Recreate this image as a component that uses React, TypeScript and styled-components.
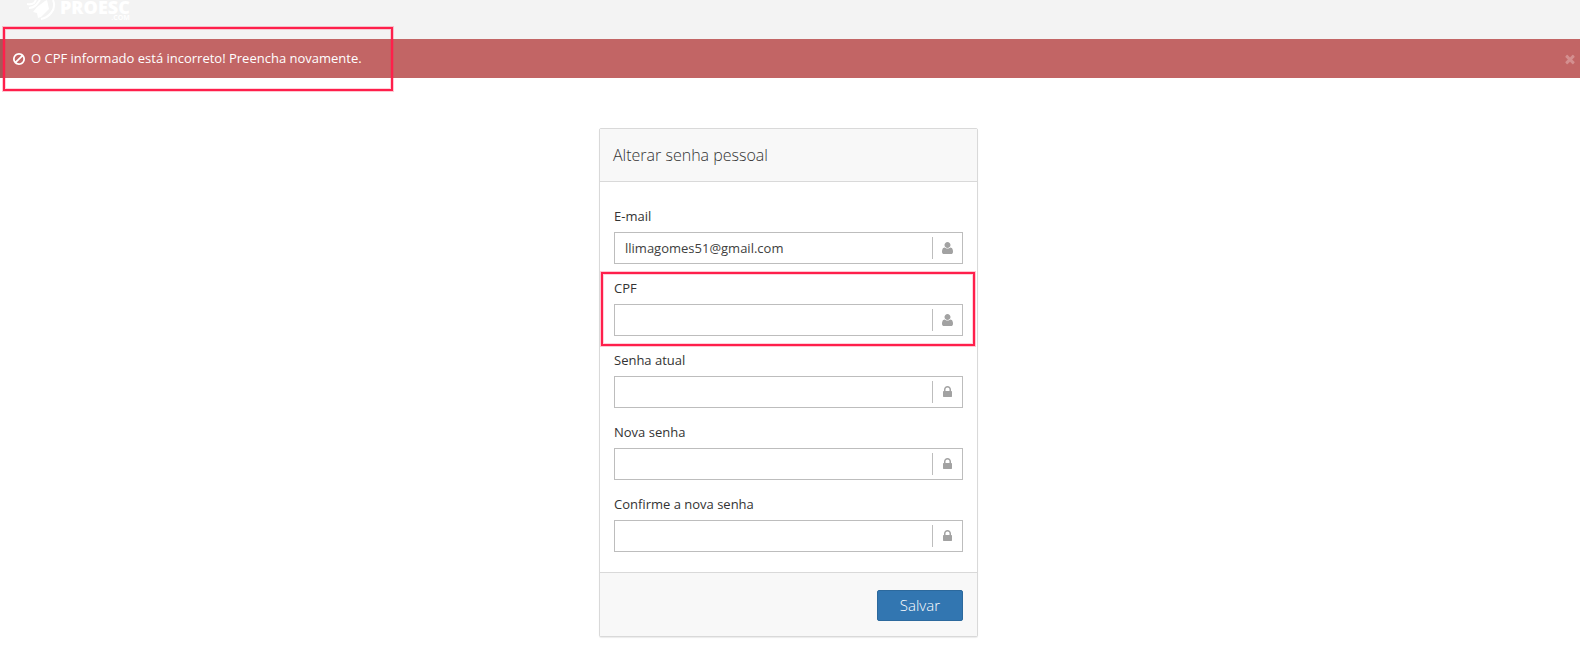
import React from 'react';
import styled, { createGlobalStyle } from 'styled-components';

const GlobalStyle = createGlobalStyle`
  *, *::before, *::after { box-sizing: border-box; }
  body {
    margin: 0;
    background: #fff;
    color: #333;
    font-family: 'Open Sans', 'Noto Sans', sans-serif;
    font-size: 13px;
    line-height: 19px;
  }
`;

const TopBar = styled.header`
  height: 39px;
  padding-left: 27px;
  background: #f3f3f3;
  overflow: hidden;
`;

const Logo = styled.a`
  display: flex;
  gap: 3px;
  width: max-content;
  color: #fff;
  text-decoration: none;
`;

const LogoMark = styled.svg`
  display: block;
  width: 30px;
  height: 21px;
`;

const LogoWords = styled.span`
  display: flex;
  flex-direction: column;
  align-items: flex-end;
`;

const LogoName = styled.span`
  font: 800 18px/14px 'Open Sans', sans-serif;
`;

const LogoSuffix = styled.span`
  font: 700 7px/8px 'Open Sans', sans-serif;
`;

const Alert = styled.div`
  position: relative;
  display: flex;
  align-items: center;
  gap: 5px;
  height: 39px;
  padding: 0 3px 0 7px;
  border-left: 5px solid #a65858;
  background: #c26565;
  color: #fff;
`;

const AlertText = styled.span`
  flex: 1;
`;

const CloseButton = styled.button`
  display: flex;
  padding: 0;
  border: 0;
  background: none;
  color: #d48f8f;
  cursor: pointer;
`;

const Highlight = styled.div<{ $inset: string; $width?: string }>`
  position: absolute;
  inset: ${p => p.$inset};
  width: ${p => p.$width ?? 'auto'};
  border: 2px solid #ff1f4b;
  box-shadow: 0 0 0 1px rgba(255, 31, 75, 0.25), inset 0 0 0 1px rgba(255, 31, 75, 0.2);
  pointer-events: none;
`;

const Main = styled.main`
  padding: 50px 16px 30px 13px;
`;

const Card = styled.form`
  max-width: 379px;
  margin: 0 auto;
  border: 1px solid #d9d9d9;
  border-radius: 2px;
  background: #fff;
  box-shadow: 0 1px 1px rgba(0, 0, 0, 0.08);
`;

const CardTitle = styled.h1`
  margin: 0;
  padding: 16px 13px;
  border-bottom: 1px solid #d9d9d9;
  background: #f8f8f8;
  font-size: 16px;
  font-weight: 300;
  line-height: 20px;
`;

const Fields = styled.div`
  display: grid;
  gap: 15px;
  padding: 25px 14px 20px;
`;

const FieldBlock = styled.div`
  position: relative;
  display: grid;
  gap: 6px;
`;

const InputFrame = styled.div`
  display: flex;
  align-items: center;
  height: 32px;
  border: 1px solid #bdbdbd;
  background: #fff;
`;

const Input = styled.input`
  flex: 1;
  min-width: 0;
  height: 30px;
  padding: 0 10px;
  border: 0;
  outline: 0;
  background: none;
  color: #404040;
  font: inherit;
`;

const Addon = styled.span`
  display: flex;
  align-items: center;
  justify-content: center;
  width: 30px;
  height: 22px;
  padding-right: 1px;
  border-left: 1px solid #bdbdbd;
  color: #a2a2a2;
`;

const CardFooter = styled.footer`
  display: flex;
  justify-content: flex-end;
  padding: 17px 14px 15px;
  border-top: 1px solid #d9d9d9;
  background: #f8f8f8;
`;

const SaveButton = styled.button`
  height: 31px;
  padding: 0 22px 2px;
  border: 1px solid #2c699d;
  border-radius: 2px;
  background: #3276b1;
  color: #fff;
  font: 300 15px/20px 'Open Sans', sans-serif;
  cursor: pointer;
`;

type GlyphShape = { w: number; d: string; flip?: boolean };

const glyphs: Record<'user' | 'lock' | 'ban' | 'times', GlyphShape> = {
  user: { w: 1408, flip: true, d: 'M1408 131q0-120-73-189.5t-194-69.5h-874q-121 0-194 69.5t-73 189.5q0 53 3.5 103.5t14 109 26.5 108.5 43 97.5 62 81 85.5 53.5 111.5 20q9 0 42-21.5t74.5-48 108-48 133.5-21.5 133.5 21.5 108 48 74.5 48 42 21.5q61 0 111.5-20t85.5-53.5 62-81 43-97.5 26.5-108.5 14-109 3.5-103.5zM1088 1024q0-159-112.5-271.5t-271.5-112.5-271.5 112.5-112.5 271.5 112.5 271.5 271.5 112.5 271.5-112.5 112.5-271.5z' },
  lock: { w: 1152, d: 'M320 768h512v-192q0-106-75-181t-181-75-181 75-75 181v192zm832 96v576q0 40-28 68t-68 28h-960q-40 0-68-28t-28-68v-576q0-40 28-68t68-28h32v-192q0-184 132-316t316-132 316 132 132 316v192h32q40 0 68 28t28 68z' },
  ban: { w: 1792, d: 'M1440 893q0-161-87-295l-754 753q137 89 297 89 111 0 211.5-43.5t173.5-116.5 116-174.5 43-212.5zm-999 299l755-754q-135-91-300-91-148 0-273 73t-198 199-73 274q0 162 89 299zm1223-299q0 157-61 300t-163.5 246-245 164-298.5 61-298.5-61-245-164-163.5-246-61-300 61-299.5 163.5-245.5 245-164 298.5-61 298.5 61 245 164 163.5 245.5 61 299.5z' },
  times: { w: 1792, d: 'M1490 1322q0 40-28 68l-136 136q-28 28-68 28t-68-28l-294-294-294 294q-28 28-68 28t-68-28l-136-136q-28-28-28-68t28-68l294-294-294-294q-28-28-28-68t28-68l136-136q28-28 68-28t68 28l294 294 294-294q28-28 68-28t68 28l136 136q28 28 28 68t-28 68l-294 294 294 294q28 28 28 68z' },
};

function Glyph({ name }: { name: keyof typeof glyphs }) {
  const g = glyphs[name];
  return (
    <svg height="14" width={(g.w / 1792) * 14} viewBox={`0 0 ${g.w} 1792`} fill="currentColor" aria-hidden="true">
      <path d={g.d} transform={g.flip ? 'translate(0 1536) scale(1 -1)' : undefined} />
    </svg>
  );
}

type FieldProps = {
  id: string;
  label: string;
  icon: 'user' | 'lock';
  type?: string;
  value?: string;
  highlighted?: boolean;
};

function Field({ id, label, icon, type = 'text', value, highlighted }: FieldProps) {
  return (
    <FieldBlock>
      <label htmlFor={id}>{label}</label>
      <InputFrame>
        <Input id={id} type={type} defaultValue={value} />
        <Addon><Glyph name={icon} /></Addon>
      </InputFrame>
      {highlighted && <Highlight $inset="-7px -12px -10px -13px" />}
    </FieldBlock>
  );
}

export default function App() {
  return (
    <>
      <GlobalStyle />
      <TopBar>
        <Logo href="#" aria-label="Proesc.com">
          <LogoMark viewBox="0 0 30 21" fill="none" stroke="currentColor" aria-hidden="true">
            <path d="M26 0Q29 7 24 13Q20 18 14 19" strokeWidth="2" />
            <path d="M0 4Q4 5 7 3L9 0M2 8Q6 8 9 5L13 0" strokeWidth="2" />
            <path d="M6 12L10 7L18 1L20 0L22 9L14 17L11 18L10 13Z" fill="currentColor" stroke="none" />
          </LogoMark>
          <LogoWords>
            <LogoName>PROESC</LogoName>
            <LogoSuffix>.COM</LogoSuffix>
          </LogoWords>
        </Logo>
      </TopBar>
      <Alert role="alert">
        <Glyph name="ban" />
        <AlertText>O CPF informado está incorreto! Preencha novamente.</AlertText>
        <CloseButton type="button" aria-label="Fechar"><Glyph name="times" /></CloseButton>
        <Highlight $inset="-12px auto -13px -2px" $width="390px" />
      </Alert>
      <Main>
        <Card onSubmit={e => e.preventDefault()}>
          <CardTitle>Alterar senha pessoal</CardTitle>
          <Fields>
            <Field id="email" label="E-mail" icon="user" value="llimagomes51@gmail.com" />
            <Field id="cpf" label="CPF" icon="user" highlighted />
            <Field id="current" label="Senha atual" icon="lock" type="password" />
            <Field id="new" label="Nova senha" icon="lock" type="password" />
            <Field id="confirm" label="Confirme a nova senha" icon="lock" type="password" />
          </Fields>
          <CardFooter>
            <SaveButton type="submit">Salvar</SaveButton>
          </CardFooter>
        </Card>
      </Main>
    </>
  );
}
